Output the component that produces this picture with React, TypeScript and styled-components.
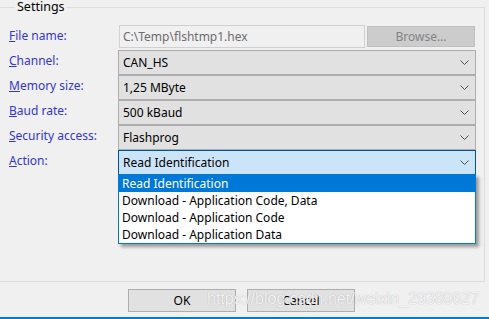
import React from 'react';
import styled, { createGlobalStyle } from 'styled-components';

const GlobalStyle = createGlobalStyle`
  html, body {
    margin: 0;
    padding: 0;
    background: #f0f0f0;
  }
  body {
    font-family: "Noto Sans", "Open Sans", sans-serif;
    font-size: 12px;
  }
`;

const Window = styled.div`
  position: relative;
  width: 489px;
  height: 319px;
  box-sizing: border-box;
  background: #f0f0f0;
  border-bottom: 2px solid #0078d7;
  overflow: hidden;
`;

const GroupBox = styled.fieldset`
  margin: 0 0 0 -1px;
  width: 486px;
  box-sizing: border-box;
  border: 1px solid #dcdcdc;
  padding: 11px 8px 106px 9px;
`;

const Legend = styled.legend`
  margin-left: 6px;
  padding: 0 2px;
  font-size: 12.5px;
  line-height: 14px;
  color: #000;
`;

const Form = styled.div`
  display: grid;
  grid-template-columns: 109px 1fr;
  grid-auto-rows: 25px;
`;

const FileRowHeight = styled.div`
  display: contents;
`;

const Label = styled.div`
  color: #3535d0;
  line-height: 17px;
  padding-top: 2px;
  white-space: nowrap;

  u {
    text-decoration: underline;
  }
`;

const FileRow = styled.div`
  display: flex;
  align-items: flex-start;
  height: 24px;
`;

const TextBox = styled.div`
  margin-left: 1px;
  width: 246px;
  height: 23px;
  box-sizing: border-box;
  border: 1px solid #d0d0d0;
  background: #f0f0f0;
  color: #6d6d6d;
  padding-left: 3px;
  line-height: 21px;
`;

const BrowseButton = styled.div`
  margin: 1px 0 0 2px;
  width: 108px;
  height: 21px;
  box-sizing: border-box;
  border: 1px solid #bfbfbf;
  background: #cccccc;
  color: #838383;
  text-align: center;
  line-height: 19px;
`;

const Combo = styled.div<{ $active?: boolean }>`
  position: relative;
  display: flex;
  align-items: center;
  justify-content: space-between;
  height: 25px;
  box-sizing: border-box;
  border: 1px solid ${(p) => (p.$active ? '#005499' : '#adadad')};
  background: ${(p) => (p.$active ? '#cce4f7' : '#e1e1e1')};
  padding: 0 6px 0 4px;
  color: #000;
`;

const Chevron = () => (
  <svg width="9" height="5" viewBox="0 0 9 5">
    <path d="M0.5 0.5 L4.5 4.5 L8.5 0.5" fill="none" stroke="#505050" strokeWidth="1" />
  </svg>
);

const DropList = styled.div`
  position: absolute;
  top: 23px;
  left: -1px;
  right: -1px;
  border: 1px solid #0078d7;
  background: #fff;
  box-shadow: 3px 3px 3px rgba(0, 0, 0, 0.35);
  z-index: 10;
`;

const DropItem = styled.div<{ $selected?: boolean }>`
  height: 17px;
  line-height: 17px;
  padding-left: 3px;
  background: ${(p) => (p.$selected ? '#0078d7' : '#fff')};
  color: ${(p) => (p.$selected ? '#fff' : '#000')};
`;

const ButtonRow = styled.div`
  display: flex;
  gap: 11px;
  padding: 7px 0 0 128px;
`;

const Button = styled.div`
  width: 108px;
  height: 23px;
  box-sizing: border-box;
  border: 1px solid #adadad;
  background: #e1e1e1;
  text-align: center;
  line-height: 21px;
  color: #000;
`;

const Watermark = styled.div`
  position: absolute;
  left: 207px;
  top: 289px;
  font-family: "Liberation Sans", Arial, sans-serif;
  font-size: 16px;
  line-height: 20px;
  color: rgba(255, 255, 255, 0.85);
  text-shadow: 0 0 1px rgba(120, 120, 120, 0.6);
  white-space: nowrap;
  pointer-events: none;
`;

const combos = [
  { label: 'Channel:', value: 'CAN_HS' },
  { label: 'Memory size:', value: '1,25 MByte' },
  { label: 'Baud rate:', value: '500 kBaud' },
  { label: 'Security access:', value: 'Flashprog' },
];

const actions = [
  'Read Identification',
  'Download - Application Code, Data',
  'Download - Application Code',
  'Download - Application Data',
];

const LabelText: React.FC<{ text: string }> = ({ text }) => (
  <Label>
    <u>{text[0]}</u>
    {text.slice(1)}
  </Label>
);

export default function App() {
  return (
    <>
      <GlobalStyle />
      <Window>
        <GroupBox>
          <Legend>Settings</Legend>
          <Form>
            <FileRowHeight>
              <LabelText text="File name:" />
              <FileRow>
                <TextBox>C:\Temp\flshtmp1.hex</TextBox>
                <BrowseButton>Browse...</BrowseButton>
              </FileRow>
            </FileRowHeight>
            {combos.map((c) => (
              <React.Fragment key={c.label}>
                <LabelText text={c.label} />
                <Combo>
                  <span>{c.value}</span>
                  <Chevron />
                </Combo>
              </React.Fragment>
            ))}
            <LabelText text="Action:" />
            <Combo $active>
              <span>Read Identification</span>
              <Chevron />
              <DropList>
                {actions.map((a, i) => (
                  <DropItem key={a} $selected={i === 0}>
                    {a}
                  </DropItem>
                ))}
              </DropList>
            </Combo>
          </Form>
        </GroupBox>
        <ButtonRow>
          <Button>OK</Button>
          <Button>Cancel</Button>
        </ButtonRow>
        <Watermark>https://blog.csdn.net/weixin_29389627</Watermark>
      </Window>
    </>
  );
}
